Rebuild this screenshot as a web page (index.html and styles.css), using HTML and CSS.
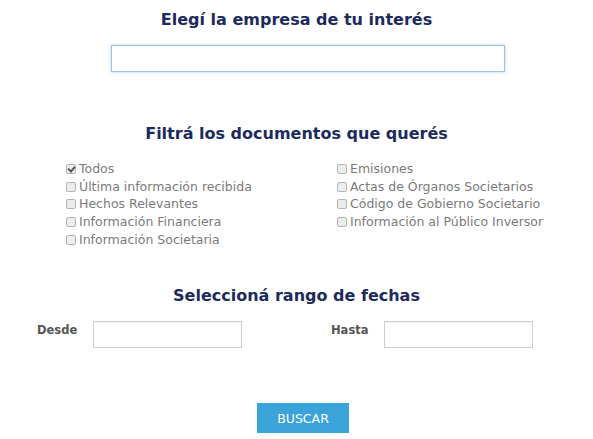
FILE: index.html
```html
<!DOCTYPE html>
<html lang="es">
<head>
    <meta charset="UTF-8">
    <meta name="viewport" content="width=device-width, initial-scale=1.0">
    <title>Buscador de documentos</title>
    <link rel="stylesheet" href="styles.css">
</head>
<body>
    <div class="container">
        <h2 class="title title-first">Elegí la empresa de tu interés</h2>
        <div class="company">
            <input type="text" class="company-input" id="company" autofocus>
        </div>

        <h2 class="title title-filter">Filtrá los documentos que querés</h2>
        <div class="filters">
            <ul class="filter-col">
                <li><label><input type="checkbox" checked> Todos</label></li>
                <li><label><input type="checkbox"> Última información recibida</label></li>
                <li><label><input type="checkbox"> Hechos Relevantes</label></li>
                <li><label><input type="checkbox"> Información Financiera</label></li>
                <li><label><input type="checkbox"> Información Societaria</label></li>
            </ul>
            <ul class="filter-col">
                <li><label><input type="checkbox"> Emisiones</label></li>
                <li><label><input type="checkbox"> Actas de Órganos Societarios</label></li>
                <li><label><input type="checkbox"> Código de Gobierno Societario</label></li>
                <li><label><input type="checkbox"> Información al Público Inversor</label></li>
            </ul>
        </div>

        <h2 class="title title-dates">Seleccioná rango de fechas</h2>
        <div class="dates">
            <div class="date-group">
                <label for="desde" class="date-label">Desde</label>
                <input type="text" id="desde" class="date-input">
            </div>
            <div class="date-group">
                <label for="hasta" class="date-label">Hasta</label>
                <input type="text" id="hasta" class="date-input">
            </div>
        </div>

        <div class="actions">
            <button class="btn-search">BUSCAR</button>
        </div>
    </div>
</body>
</html>
```

FILE: styles.css
```css
body { margin: 0; background: #fff; font-family: "DejaVu Sans", "Open Sans", sans-serif; color: #777; }
.container { width: 593px; height: 439px; overflow: hidden; }

.title { margin: 0; text-align: center; color: #1c2b5c; font-size: 16px; font-weight: bold; line-height: 20px; letter-spacing: 0; }
.title-first { padding-top: 10px; }
.title-filter { margin-top: 52px; }
.title-dates { margin-top: 38px; }

.company { padding: 15px 0 0 111px; }
.company-input { display: block; box-sizing: border-box; width: 394px; height: 27px; border: 1px solid #9ec3e6; box-shadow: 0 0 3px rgba(102,160,220,0.5); outline: none; padding: 0 9px; font-size: 13px; caret-color: #333; }

.filters { display: grid; grid-template-columns: 271px 1fr; padding: 16px 0 0 66px; }
.filter-col { list-style: none; margin: 0; padding: 0; }
.filter-col li { height: 17.7px; line-height: 17.7px; font-size: 12.5px; color: #7a7a7a; white-space: nowrap; }
.filter-col label { display: flex; align-items: center; }
.filter-col input { appearance: none; -webkit-appearance: none; box-sizing: border-box; width: 10px; height: 10px; margin: 0 3px 0 0; border: 1px solid #b4b4b4; border-radius: 2px; background: #ececec; position: relative; }
.filter-col input:checked::after { content: ""; position: absolute; left: 2px; top: 0; width: 3px; height: 5px; border: solid #555; border-width: 0 2px 2px 0; transform: rotate(40deg); }

.dates { display: grid; grid-template-columns: 294px 1fr; padding: 15px 0 0 37px; }
.date-group { display: flex; align-items: center; }
.date-label { width: 56px; font-size: 11.5px; font-weight: bold; color: #555; margin-top: -9px; }
.date-group + .date-group .date-label { width: 53px; }
.date-input { box-sizing: border-box; width: 149px; height: 27px; border: 1px solid #cfcfcf; box-shadow: inset 0 1px 1px rgba(0,0,0,0.05); outline: none; }

.actions { text-align: center; padding-top: 55px; padding-left: 13px; }
.btn-search { width: 92px; height: 30px; border: none; background: #3aa3da; color: #fff; font-family: "DejaVu Sans", sans-serif; font-size: 12.5px; cursor: pointer; }
```
